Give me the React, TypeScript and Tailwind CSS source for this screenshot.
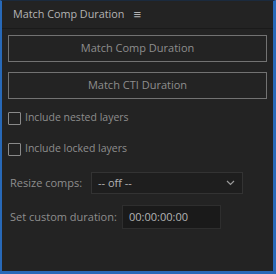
import React from "react";

const font = { fontFamily: '"Open Sans", "Noto Sans", sans-serif' };

const Checkbox: React.FC<{ label: string }> = ({ label }) => (
  <label className="flex items-center gap-[4px] h-[16px]">
    <span className="w-[13px] h-[13px] border border-[#8a8a8a] rounded-[1px]" />
    <span className="text-[10.5px] text-[#8e8e8e]">{label}</span>
  </label>
);

export default function App() {
  return (
    <div
      className="w-[276px] h-[274px] bg-[#232323] border-l-2 border-r-[3px] border-b-[3px] border-t border-l-[#2869b8] border-r-[#2869b8] border-b-[#2869b8] border-t-[#1b2a3d] flex flex-col"
      style={font}
    >
      {/* Header */}
      <div className="h-[28px] flex items-center pl-[11px] gap-[9px] border-b border-[#1a1a1a]">
        <span className="text-[10.8px] text-[#b4b4b4]">Match Comp Duration</span>
        <span className="text-[13px] text-[#b4b4b4] leading-none">≡</span>
      </div>

      {/* Body */}
      <div className="flex flex-col px-[6px] pt-[6px]">
        <button className="h-[27px] w-full border border-[#727272] text-[11px] text-[#8e8e8e]">
          Match Comp Duration
        </button>
        <button className="mt-[10px] h-[27px] w-full border border-[#727272] text-[11px] text-[#8e8e8e]">
          Match CTI Duration
        </button>

        <div className="mt-[11px] flex flex-col gap-[15px]">
          <Checkbox label="Include nested layers" />
          <Checkbox label="Include locked layers" />
        </div>

        <div className="mt-[15px] pl-[2px] flex items-center">
          <span className="w-[81px] text-[11px] text-[#8e8e8e]">Resize comps:</span>
          <div className="w-[152px] h-[22px] bg-[#1e1e1e] border border-[#333] flex items-center justify-between pl-[6px] pr-[7px]">
            <span className="text-[11px] text-[#b4b4b4]">-- off --</span>
            <svg width="9" height="6" viewBox="0 0 9 6">
              <path d="M1 1l3.5 3.5L8 1" stroke="#9a9a9a" strokeWidth="1.2" fill="none" />
            </svg>
          </div>
        </div>

        <div className="mt-[11px] pl-[2px] flex items-center">
          <span className="w-[112px] text-[11px] text-[#8e8e8e]">Set custom duration:</span>
          <div className="w-[99px] h-[24px] bg-[#1a1a1a] border border-[#2e2e2e] flex items-center px-[6px]">
            <span className="text-[11px] text-[#b4b4b4]">00:00:00:00</span>
          </div>
        </div>
      </div>
    </div>
  );
}
